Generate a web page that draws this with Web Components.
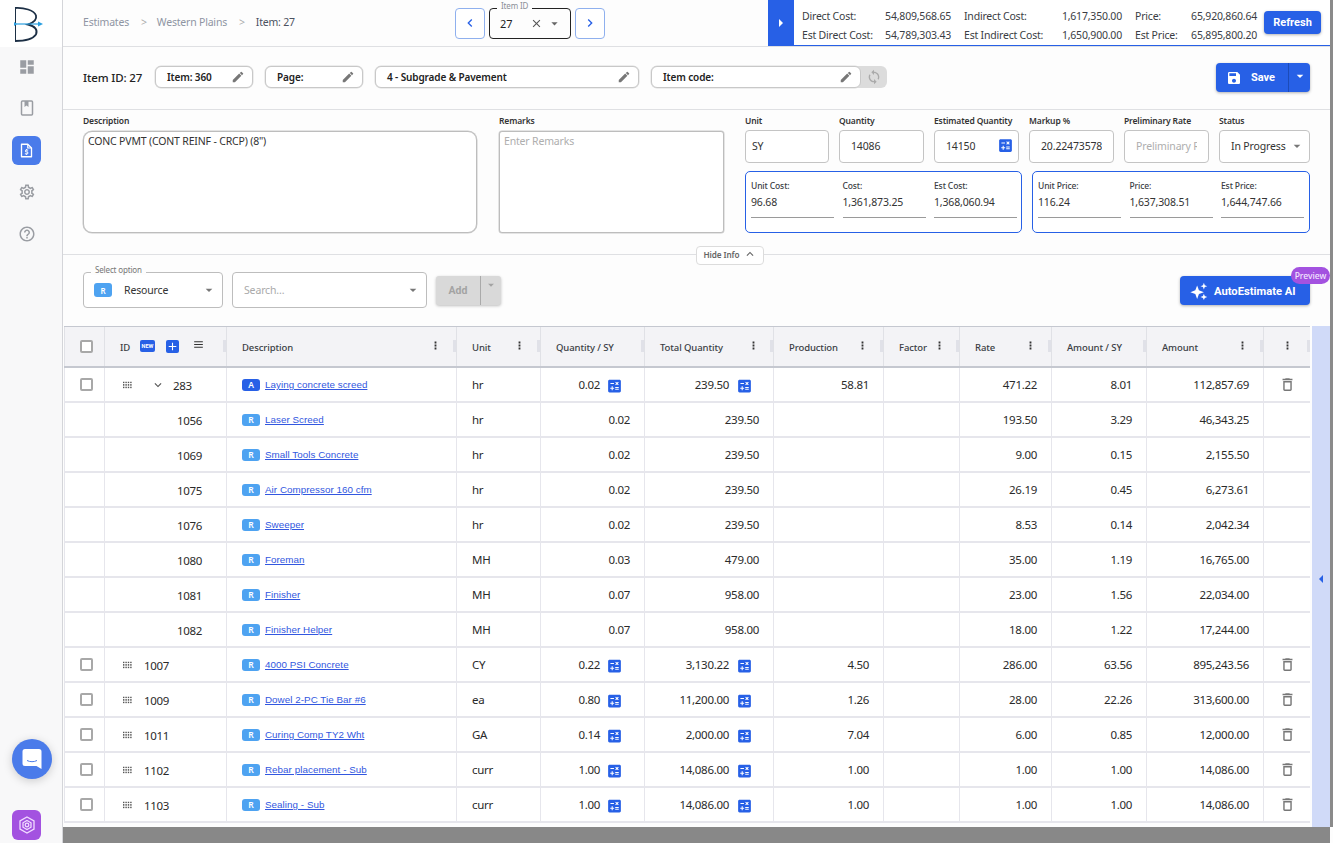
<!DOCTYPE html>
<html>
<head>
<meta charset="utf-8">
<title>Estimate item</title>
<style>
    html, body { margin: 0; height: 100%; overflow: hidden; }
    body { font-family: 'Noto Sans', sans-serif; color: #222; background: #fdfdfd; }
</style>
</head>
<body>
<est-app>
    <side-nav slot="nav"></side-nav>
    <top-bar></top-bar>
    <item-bar></item-bar>
    <info-panel></info-panel>
    <add-bar></add-bar>
    <est-table></est-table>
</est-app>

<script>
const ICONS = {
    dashboard: 'M3 13h8V3H3v10zm0 8h8v-6H3v6zm10 0h8V11h-8v10zm0-18v6h8V3h-8z',
    edit: 'M3 17.25V21h3.75L17.81 9.94l-3.75-3.75L3 17.25zM20.71 7.04c.39-.39.39-1.02 0-1.41l-2.34-2.34a.9959.9959 0 0 0-1.41 0l-1.83 1.83 3.75 3.75 1.83-1.83z',
    save: 'M17 3H5c-1.11 0-2 .9-2 2v14c0 1.1.89 2 2 2h14c1.1 0 2-.9 2-2V7l-4-4zm-5 16c-1.66 0-3-1.34-3-3s1.34-3 3-3 3 1.34 3 3-1.34 3-3 3zm3-10H5V5h10v4z',
    gear: 'M19.43 12.98c.04-.32.07-.64.07-.98 0-.34-.03-.66-.07-.98l2.11-1.65c.19-.15.24-.42.12-.64l-2-3.46c-.09-.16-.26-.25-.44-.25-.06 0-.12.01-.17.03l-2.49 1c-.52-.4-1.08-.73-1.69-.98l-.38-2.65C14.46 2.18 14.25 2 14 2h-4c-.25 0-.46.18-.49.42l-.38 2.65c-.61.25-1.17.59-1.69.98l-2.49-1c-.06-.02-.12-.03-.18-.03-.17 0-.34.09-.43.25l-2 3.46c-.13.22-.07.49.12.64l2.11 1.65c-.04.32-.07.65-.07.98 0 .33.03.66.07.98l-2.11 1.65c-.19.15-.24.42-.12.64l2 3.46c.09.16.26.25.44.25.06 0 .12-.01.17-.03l2.49-1c.52.4 1.08.73 1.69.98l.38 2.65c.03.24.24.42.49.42h4c.25 0 .46-.18.49-.42l.38-2.65c.61-.25 1.17-.59 1.69-.98l2.49 1c.06.02.12.03.18.03.17 0 .34-.09.43-.25l2-3.46c.12-.22.07-.49-.12-.64l-2.11-1.65zm-1.98-1.71c.04.31.05.52.05.73 0 .21-.02.43-.05.73l-.14 1.13.89.7 1.08.84-.7 1.21-1.27-.51-1.04-.42-.9.68c-.43.32-.84.56-1.25.73l-1.06.43-.16 1.13-.2 1.35h-1.4l-.19-1.35-.16-1.13-1.06-.43c-.43-.18-.83-.41-1.23-.71l-.91-.7-1.06.43-1.27.51-.7-1.21 1.08-.84.89-.7-.14-1.13c-.03-.31-.05-.54-.05-.74s.02-.43.05-.73l.14-1.13-.89-.7-1.08-.84.7-1.21 1.27.51 1.04.42.9-.68c.43-.32.84-.56 1.25-.73l1.06-.43.16-1.13.2-1.35h1.39l.19 1.35.16 1.13 1.06.43c.43.18.83.41 1.23.71l.91.7 1.06-.43 1.27-.51.7 1.21-1.07.85-.89.7.14 1.13zM12 8c-2.21 0-4 1.79-4 4s1.79 4 4 4 4-1.79 4-4-1.79-4-4-4zm0 6c-1.1 0-2-.9-2-2s.9-2 2-2 2 .9 2 2-.9 2-2 2z',
    help: 'M11 18h2v-2h-2v2zm1-16C6.48 2 2 6.48 2 12s4.48 10 10 10 10-4.48 10-10S17.52 2 12 2zm0 18c-4.41 0-8-3.59-8-8s3.59-8 8-8 8 3.59 8 8-3.59 8-8 8zm0-14c-2.21 0-4 1.79-4 4h2c0-1.1.9-2 2-2s2 .9 2 2c0 2-3 1.75-3 5h2c0-2.25 3-2.5 3-5 0-2.21-1.79-4-4-4z',
    trash: 'M6 19c0 1.1.9 2 2 2h8c1.1 0 2-.9 2-2V7H6v12zM8 9h8v10H8V9zm7.5-5l-1-1h-5l-1 1H5v2h14V4z',
    sync: 'M12 4V1L8 5l4 4V6c3.31 0 6 2.69 6 6 0 1.01-.25 1.97-.7 2.8l1.46 1.46C19.54 15.03 20 13.57 20 12c0-4.42-3.58-8-8-8zm0 14c-3.31 0-6-2.69-6-6 0-1.01.25-1.97.7-2.8L5.24 7.74C4.46 8.97 4 10.43 4 12c0 4.42 3.58 8 8 8v3l4-4-4-4v3z',
    calc: 'M19 3H5c-1.1 0-2 .9-2 2v14c0 1.1.9 2 2 2h14c1.1 0 2-.9 2-2V5c0-1.1-.9-2-2-2zm-5.97 4.06L14.09 6l1.41 1.41L16.91 6l1.06 1.06-1.41 1.41 1.41 1.41-1.06 1.06-1.41-1.4-1.41 1.41-1.06-1.06 1.41-1.41-1.41-1.42zm-6.78.66h5v1.5h-5v-1.5zM11.5 16h-2v2H8v-2H6v-1.5h2v-2h1.5v2h2V16zm6.5 1.25h-5v-1.5h5v1.5zm0-2.5h-5v-1.5h5v1.5z',
    caret: 'M7 10l5 5 5-5z',
    close: 'M19 6.41L17.59 5 12 10.59 6.41 5 5 6.41 10.59 12 5 17.59 6.41 19 12 13.41 17.59 19 19 17.59 13.41 12z',
    left: 'M15.41 7.41L14 6l-6 6 6 6 1.41-1.41L10.83 12z',
    right: 'M10 6L8.59 7.41 13.17 12l-4.58 4.59L10 18l6-6z',
    up: 'M12 8l-6 6 1.41 1.41L12 10.83l4.59 4.58L18 14z',
    down: 'M16.59 8.59L12 13.17 7.41 8.59 6 10l6 6 6-6z',
    plus: 'M19 13h-6v6h-2v-6H5v-2h6V5h2v6h6v2z',
    menu: 'M4 6h16v2H4zM4 11h16v2H4zM4 16h16v2H4z',
    dots: 'M10 3.5h4v4h-4zM10 10h4v4h-4zM10 16.5h4v4h-4z',
    spark: 'M9.500 4.500l2.400 6.600 6.600 2.400-6.600 2.400L9.500 22.500l-2.400-6.600L.500 13.500l6.600-2.400zM18.500 1l1.200 3.300 3.300 1.200-3.300 1.200-1.200 3.300-1.200-3.300-3.300-1.200 3.300-1.200zM18.500 15.500l1.200 3.300 3.300 1.200-3.300 1.200-1.200 2.800-1.200-2.800-3.300-1.200 3.300-1.200z'
};

const icon = (name, size, color) =>
    `<svg width="${size}" height="${size}" viewBox="0 0 24 24" fill="${color}" style="display:block;flex:none"><path d="${ICONS[name]}"/></svg>`;

// small grid of dots used as the drag handle in the table
const dragHandle = () => {
    let dots = '';
    for (let x = 0; x < 4; x++) {
        for (let y = 0; y < 3; y++) {
            dots += `<rect x="${x * 2.4}" y="${y * 2.6}" width="1.4" height="1.6"/>`;
        }
    }
    return `<svg width="9" height="7" viewBox="0 0 9 7" fill="#555" style="display:block;flex:none">${dots}</svg>`;
};

const UI = `font-family: 'Noto Sans', sans-serif;`;

class EstApp extends HTMLElement {
    constructor() {
        super();
        this.attachShadow({mode: 'open'});
        this.shadowRoot.innerHTML = `
            <style>
                :host { display: grid; grid-template-columns: 63px 1267px 3px; height: 843px; overflow: hidden; }
                main { display: flex; flex-direction: column; min-width: 0; height: 827px; }
                .strip { background: #8a8a8a; height: 827px; }
                .hbar { grid-column: 2 / span 1; background: #888; height: 16px; }
                .side { grid-row: 1 / span 2; }
            </style>
            <div class="side"><slot name="nav"></slot></div>
            <main><slot></slot></main>
            <div class="strip"></div>
            <div class="hbar"></div>
        `;
    }
}

class SideNav extends HTMLElement {
    constructor() {
        super();
        this.attachShadow({mode: 'open'});
        const item = (name, on) => `<div class="nav ${on ? 'on' : ''}">${name}</div>`;
        this.shadowRoot.innerHTML = `
            <style>
                :host { display: flex; flex-direction: column; width: 62px; height: 843px; background: #f8f8f9; border-right: 1px solid #d4d5d9; box-sizing: content-box; }
                .logo { height: 47px; background: #fff; display: flex; align-items: center; padding-left: 14px; }
                .items { display: flex; flex-direction: column; align-items: flex-start; gap: 12.750px; padding: 5px 0 0 12px; }
                .nav { width: 29px; height: 29px; border-radius: 6px; display: flex; align-items: center; justify-content: center; }
                .nav.on { background: #4a7bea; }
                .grow { flex: 1; }
                .chat { width: 40px; height: 40px; margin: 0 0 31px 12px; border-radius: 50%; background: #4a7bea; display: flex; align-items: center; justify-content: center; box-shadow: 0 2px 10px rgba(0,0,0,.18); }
                .ai { width: 29px; height: 30px; margin: 0 0 3px 12px; border-radius: 6px; background: #a352e0; display: flex; align-items: center; justify-content: center; }
            </style>
            <div class="logo">
                <svg width="32" height="36" viewBox="0 0 32 36" fill="none">
                    <path d="M1.500 2.500V35" stroke="#1c2f45" stroke-width="1"/>
                    <path d="M1 2C10 1.500 20 4 22 9.500C23 13.500 20 16.500 14 18.500C21 20 24 24 22 28.500C19 33 10 35 1 35" stroke="#1c2f45" stroke-width="1.800"/>
                    <path d="M1 18H27" stroke="#2b9fe0" stroke-width="1.200"/>
                    <path d="M24 15.500L29 18L24 20.500z" fill="#2b9fe0"/>
                    <path d="M0 16L3 18L0 20z" fill="#2b9fe0"/>
                </svg>
            </div>
            <div class="items">
                ${item(icon('dashboard', 18, '#9a9da3'))}
                ${item(`<svg width="18" height="18" viewBox="0 0 18 18" fill="none" stroke="#9a9da3" stroke-width="1.500"><rect x="3.500" y="2" width="11" height="14" rx="1"/><path d="M6.500 2v6l2-1.500 2 1.500V2" fill="#9a9da3" stroke="none"/></svg>`)}
                ${item(`<svg width="15" height="17" viewBox="0 0 18 20" fill="none"><path d="M3 2.500h7.500L15 7v10.500H3z" stroke="#fff" stroke-width="1.600" stroke-linejoin="round"/><path d="M10.500 2.500V7H15" stroke="#fff" stroke-width="1.400"/><path d="M11 9.500H8v2.200h2.500v2.300H7M9 8.300v1.200M9 14v1.200" stroke="#fff" stroke-width="1.200"/></svg>`, true)}
                ${item(icon('gear', 18, '#9a9da3'))}
                ${item(icon('help', 18, '#9a9da3'))}
            </div>
            <div class="grow"></div>
            <div class="chat">
                <svg width="22" height="24" viewBox="0 0 22 24"><path d="M4 2h14a2.500 2.500 0 0 1 2.500 2.500V22l-5-3H4a2.500 2.500 0 0 1-2.500-2.500v-12A2.500 2.500 0 0 1 4 2z" fill="#fff"/><path d="M6 13.500c3 1.600 7 1.600 10 0" stroke="#4a7bea" stroke-width="1" fill="none"/></svg>
            </div>
            <div class="ai">
                <svg width="20" height="20" viewBox="0 0 20 20" fill="none" stroke="#f1dcff" stroke-width="1.300"><path d="M10 2l7 4v8l-7 4-7-4V6z"/><path d="M10 5.500l4 2.300v4.400l-4 2.300-4-2.300V7.800z"/><circle cx="10" cy="10" r="1.800"/></svg>
            </div>
        `;
    }
}

class SumCell extends HTMLElement {
    constructor() {
        super();
        this.attachShadow({mode: 'open'});
        this.shadowRoot.innerHTML = `
            <style>
                :host { display: flex; justify-content: space-between; ${UI} font-size: 10.5px; letter-spacing: -.2px; color: #3a3d44; white-space: nowrap; line-height: 17px; }
            </style>
            <span>${this.getAttribute('label')}</span><span>${this.getAttribute('value')}</span>
        `;
    }
}

class TopBar extends HTMLElement {
    constructor() {
        super();
        this.attachShadow({mode: 'open'});
        this.shadowRoot.innerHTML = `
            <style>
                :host { display: flex; align-items: stretch; height: 46px; border-bottom: 1px solid #dfe0e3; ${UI} flex: none; background: #fdfdfd; }
                .crumbs { padding: 0 0 2px 20px; box-sizing: content-box; width: 372px; display: flex; align-items: center; font-size: 10.5px; letter-spacing: -.2px; color: #8f95a3; }
                .crumbs i { font-style: normal; margin: 0 10px 0 12px; color: #aaa; }
                .crumbs b { font-weight: 400; color: #4c5260; margin-left: 1px; }
                .pager { display: flex; align-items: center; gap: 4px; width: 313px; }
                .pg { width: 28px; height: 29px; border: 1px solid #8fb0ee; border-radius: 4px; display: flex; align-items: center; justify-content: center; background: #fff; }
                .sel { position: relative; height: 29px; border: 1px solid #222; border-radius: 4px; display: flex; align-items: center; font-size: 11px; padding-left: 10px; box-sizing: content-box; width: 70px; }
                .sel span { flex: 1; }
                .sel em { position: absolute; left: 7px; top: -8px; background: #fdfdfd; padding: 0 4px; font-style: normal; font-size: 8px; color: #8b8f97; letter-spacing: -.15px; line-height: 10px; }
                .sum { flex: 1; display: flex; border-bottom: 1px solid #2760e6; height: 45px; background: #fff; }
                .tog { width: 26px; background: #2760e6; display: flex; align-items: center; justify-content: center; flex: none; }
                .tog div { width: 0; height: 0; border-left: 4px solid #fff; border-top: 4px solid transparent; border-bottom: 4px solid transparent; }
                .g { display: grid; grid-template-columns: 149px 158px 122px; column-gap: 13px; padding: 8px 0 0 8px; }
                button { margin: 11px 0 0 7px; width: 57px; height: 23px; border: 0; border-radius: 4px; background: #2760e6; color: #fff; font: 700 11px Roboto, sans-serif; box-shadow: 0 1px 3px rgba(0,0,0,.3); padding: 0; }
            </style>
            <div class="crumbs">Estimates<i>&gt;</i>Western Plains<i>&gt;</i><b>Item: 27</b></div>
            <div class="pager">
                <div class="pg">${icon('left', 16, '#2760e6')}</div>
                <div class="sel"><em>Item ID</em><span>27</span>${icon('close', 13, '#555')}<span style="flex:none;width:4px"></span>${icon('caret', 15, '#666')}<span style="flex:none;width:8px"></span></div>
                <div class="pg">${icon('right', 16, '#2760e6')}</div>
            </div>
            <div class="sum">
                <div class="tog"><div></div></div>
                <div class="g">
                    <sum-cell label="Direct Cost:" value="54,809,568.65"></sum-cell>
                    <sum-cell label="Indirect Cost:" value="1,617,350.00"></sum-cell>
                    <sum-cell label="Price:" value="65,920,860.64"></sum-cell>
                    <sum-cell label="Est Direct Cost:" value="54,789,303.43"></sum-cell>
                    <sum-cell label="Est Indirect Cost:" value="1,650,900.00"></sum-cell>
                    <sum-cell label="Est Price:" value="65,895,800.20"></sum-cell>
                </div>
                <button>Refresh</button>
            </div>
        `;
    }
}

class EditChip extends HTMLElement {
    constructor() {
        super();
        this.attachShadow({mode: 'open'});
        this.shadowRoot.innerHTML = `
            <style>
                :host { display: flex; align-items: center; justify-content: space-between; height: 20px; box-sizing: content-box; border: 1px solid #c8c8c8; border-radius: 6px; box-shadow: 0 0 0 .5px #ddd; padding: 0 7px 0 11px; background: #fff; ${UI} font-size: 10px; font-weight: 600; letter-spacing: -.12px; color: #222; white-space: nowrap; }
            </style>
            <span><slot></slot></span>${icon('edit', 14, '#777')}
        `;
    }
}

class ItemBar extends HTMLElement {
    constructor() {
        super();
        this.attachShadow({mode: 'open'});
        this.shadowRoot.innerHTML = `
            <style>
                :host { display: flex; align-items: center; padding: 0 0 2px 20px; box-sizing: border-box; height: 63px; border-bottom: 1px solid #dfe0e3; ${UI} flex: none; }
                h1 { margin: 0 11px 0 0; font-size: 11.5px; font-weight: 500; letter-spacing: -.15px; width: 61px; white-space: nowrap; }
                edit-chip { margin-right: 12px; }
                .code { display: flex; align-items: stretch; width: 236px; height: 22px; background: #dcdcdc; border-radius: 6px; }
                .code edit-chip { flex: 1; margin: 0; }
                .code div { width: 26px; display: flex; align-items: center; justify-content: center; }
                .save { margin: 1px 20px 0 auto; display: flex; width: 94px; height: 29px; border-radius: 4px; background: #2760e6; box-shadow: 0 1px 3px rgba(0,0,0,.3); color: #fff; font: 700 11px Roboto, sans-serif; }
                .save span { flex: 1; display: flex; align-items: center; gap: 9px; padding-left: 10px; }
                .save i { width: 21px; border-left: 1px solid #1c4bb8; display: flex; justify-content: center; align-items: flex-start; padding-top: 5px; }
            </style>
            <h1>Item ID: 27</h1>
            <edit-chip style="width:78px">Item: 360</edit-chip>
            <edit-chip style="width:78px">Page:</edit-chip>
            <edit-chip style="width:244px">4 - Subgrade &amp; Pavement</edit-chip>
            <div class="code"><edit-chip>Item code:</edit-chip><div>${icon('sync', 16, '#aaa')}</div></div>
            <div class="save"><span>${icon('save', 16, '#fff')}Save</span><i>${icon('caret', 16, '#fff')}</i></div>
        `;
    }
}

class FormField extends HTMLElement {
    constructor() {
        super();
        this.attachShadow({mode: 'open'});
        const ph = this.hasAttribute('placeholder');
        const text = this.getAttribute('placeholder') || this.getAttribute('value');
        this.shadowRoot.innerHTML = `
            <style>
                :host { display: block; ${UI} min-width: 0; }
                label { display: block; font-size: 8.500px; font-weight: 600; letter-spacing: -.12px; color: #333; line-height: 12px; margin-bottom: 3px; white-space: nowrap; }
                .box { height: 33px; box-sizing: border-box; border: 1px solid #c4c4c4; border-radius: 4px; background: #fff; display: flex; align-items: center; padding: 0 ${this.getAttribute('end') || 4}px 2px ${this.getAttribute('pad') || 11}px; font-size: 10.500px; letter-spacing: -.15px; color: ${ph ? '#aeaeae' : '#333'}; overflow: hidden; white-space: nowrap; }
                .t { flex: 1; overflow: hidden; min-width: 0; }
            </style>
            <label>${this.getAttribute('label')}</label>
            <div class="box"><div class="t">${text}</div><slot></slot></div>
        `;
    }
}

class AreaField extends HTMLElement {
    constructor() {
        super();
        this.attachShadow({mode: 'open'});
        const ph = this.hasAttribute('placeholder');
        this.shadowRoot.innerHTML = `
            <style>
                :host { display: block; ${UI} }
                label { display: block; font-size: 8.500px; font-weight: 600; letter-spacing: -.12px; color: #333; line-height: 12px; margin-bottom: 4px; }
                .box { border: 1px solid #bdbdbd; box-shadow: 0 0 0 .5px #ccc; border-radius: ${this.getAttribute('radius')}px; background: #fff; padding: 2px 4px; font-size: 10.500px; letter-spacing: -.17px; color: ${ph ? '#aeaeae' : '#333'}; box-sizing: border-box; height: 102px; }
            </style>
            <label>${this.getAttribute('label')}</label>
            <div class="box">${this.getAttribute('placeholder') || this.getAttribute('value')}</div>
        `;
    }
}

class MoneyBox extends HTMLElement {
    constructor() {
        super();
        this.attachShadow({mode: 'open'});
        const items = JSON.parse(this.getAttribute('items'));
        this.shadowRoot.innerHTML = `
            <style>
                :host { display: grid; grid-template-columns: repeat(3, 83px); column-gap: 8.500px; height: 62px; box-sizing: border-box; border: 1px solid #2760e6; border-radius: 5px; padding: 8px 5px 0; ${UI} background: #fff; }
                small { display: block; font-size: 8.500px; font-weight: 500; letter-spacing: -.12px; color: #3a3d44; line-height: 12px; }
                div.v { font-size: 10.500px; letter-spacing: -.16px; color: #333; line-height: 15px; margin-top: 3px; padding-bottom: 7px; border-bottom: 1px solid #9a9a9a; white-space: nowrap; }
            </style>
            ${items.map(i => `<div><small>${i[0]}</small><div class="v">${i[1]}</div></div>`).join('')}
        `;
    }
}

class InfoPanel extends HTMLElement {
    constructor() {
        super();
        this.attachShadow({mode: 'open'});
        this.shadowRoot.innerHTML = `
            <style>
                :host { display: block; flex: none; ${UI} }
                .grid { display: grid; grid-template-columns: 394px 224px 565px; column-gap: 22px; padding: 5px 20px 0; height: 144px; box-sizing: border-box; }
                .remarks { margin-right: -1px; }
                .right { display: flex; flex-direction: column; gap: 8px; }
                .fields { display: grid; grid-template-columns: 84px 85px 85px 85px 85px 91px; column-gap: 10px; }
                .boxes { display: grid; grid-template-columns: 277px 278px; column-gap: 10px; }
                .hide { border-top: 1px solid #dfe0e3; height: 0; display: flex; justify-content: center; padding-left: 67px; position: relative; z-index: 1; }
                .hide div { margin-top: -9px; height: 17px; width: 66px; padding-bottom: 3px; box-sizing: content-box; height: 14px; border: 1px solid #dcdcdc; border-radius: 4px; background: #fff; display: flex; align-items: center; justify-content: center; gap: 3px; font-size: 8.200px; font-weight: 600; letter-spacing: -.1px; color: #666; }
            </style>
            <div class="grid">
                <area-field label="Description" radius="9" value='CONC PVMT (CONT REINF - CRCP) (8")'></area-field>
                <area-field class="remarks" label="Remarks" radius="3" placeholder="Enter Remarks"></area-field>
                <div class="right">
                    <div class="fields">
                        <form-field label="Unit" value="SY" pad="6"></form-field>
                        <form-field label="Quantity" value="14086"></form-field>
                        <form-field label="Estimated Quantity" value="14150">${icon('calc', 17, '#2760e6')}</form-field>
                        <form-field label="Markup %" value="20.224735783" end="11"></form-field>
                        <form-field label="Preliminary Rate" placeholder="Preliminary Rate" end="11"></form-field>
                        <form-field label="Status" value="In Progress">${icon('caret', 16, '#777')}</form-field>
                    </div>
                    <div class="boxes">
                        <money-box items='[["Unit Cost:","96.68"],["Cost:","1,361,873.25"],["Est Cost:","1,368,060.94"]]'></money-box>
                        <money-box items='[["Unit Price:","116.24"],["Price:","1,637,308.51"],["Est Price:","1,644,747.66"]]'></money-box>
                    </div>
                </div>
            </div>
            <div class="hide"><div>Hide Info ${icon('up', 14, '#666')}</div></div>
        `;
    }
}

class AddBar extends HTMLElement {
    constructor() {
        super();
        this.attachShadow({mode: 'open'});
        this.shadowRoot.innerHTML = `
            <style>
                :host { display: flex; align-items: center; height: 71px; padding: 0 20px; flex: none; ${UI} box-sizing: border-box; }
                .s { position: relative; height: 34px; margin-top: -1px; border: 1px solid #bdbdbd; border-radius: 4px; background: #fff; display: flex; align-items: center; font-size: 10.500px; letter-spacing: -.15px; color: #333; }
                .s em { position: absolute; left: 7px; top: -8px; background: #fdfdfd; padding: 0 4px; font-style: normal; font-size: 8px; line-height: 10px; color: #777; }
                .tag { width: 18px; height: 14px; border-radius: 3px; background: #4ea3f1; color: #fff; font-size: 8px; font-weight: 600; display: flex; align-items: center; justify-content: center; margin: 0 12px 0 10px; letter-spacing: 0; }
                .grow { flex: 1; }
                .add { display: flex; width: 65px; height: 29px; margin-left: 9px; background: #d9d9d9; border-radius: 3px; box-shadow: 0 1px 3px rgba(0,0,0,.25); color: #a3a3a3; font: 700 10.500px Roboto, sans-serif; }
                .add span { flex: 1; display: flex; align-items: center; justify-content: center; }
                .add i { width: 21px; border-left: 1px solid #aaa; display: flex; justify-content: center; padding-top: 2px; box-sizing: border-box; }
                .auto { position: relative; width: 130px; height: 29px; padding-top: 1px; background: #2760e6; border-radius: 4px; box-shadow: 0 1px 3px rgba(0,0,0,.3); color: #fff; font: 700 11.200px Roboto, sans-serif; display: flex; align-items: center; gap: 6px; padding-left: 10px; box-sizing: border-box; white-space: nowrap; }
                .auto em { position: absolute; right: -20px; top: -9px; width: 39px; height: 17px; border-radius: 9px; background: #a352e0; font: 500 8.500px 'Noto Sans', sans-serif; display: flex; align-items: center; justify-content: center; color: #f3e6ff; }
            </style>
            <div class="s" style="width:138px"><em>Select option</em><div class="tag">R</div><span style="flex:1">Resource</span>${icon('caret', 16, '#777')}<span style="width:5px"></span></div>
            <div class="s" style="width:193px;margin-left:9px;color:#aaa"><span style="flex:1;padding-left:11px">Search...</span>${icon('caret', 16, '#777')}<span style="width:5px"></span></div>
            <div class="add"><span>Add</span><i>${icon('caret', 14, '#a3a3a3')}</i></div>
            <div class="grow"></div>
            <div class="auto">${icon('spark', 18, '#fff')}AutoEstimate AI<em>Preview</em></div>
        `;
    }
}

const GRID = '40px 122px 230px 84px 104px 129px 110px 76px 92px 95px 117px 47px';

class EstHead extends HTMLElement {
    constructor() {
        super();
        this.attachShadow({mode: 'open'});
        const th = (label, dotsAt) => `
            <div class="th">${label ? `<span class="l">${label}</span>` : ''}${dotsAt ? `<span class="d" style="left:${dotsAt}px">${icon('dots', 11, '#333')}</span>` : ''}<u></u></div>`;
        this.shadowRoot.innerHTML = `
            <style>
                :host { display: grid; grid-template-columns: ${GRID}; height: 39px; background: #f3f3f6; border-top: 1px solid #c5c8d0; border-bottom: 2px solid #c5c8d0; ${UI} font-size: 9.500px; letter-spacing: -.1px; font-weight: 500; color: #3a3d44; box-sizing: content-box; }
                .th { position: relative; display: flex; align-items: center; padding-left: 15px; border-left: 1px solid #e0e1e6; box-sizing: border-box; white-space: nowrap; }
                .th:first-child { border-left: 0; }
                .l { padding-top: 2px; }
                .d { position: absolute; top: 13px; }
                u { position: absolute; right: 0; top: 13px; width: 3px; height: 12px; background: #e0e1e8; }
                .cb { width: 13px; height: 13px; border: 2px solid #a8a8a8; border-radius: 2px; background: #fff; box-sizing: border-box; }
                .nw { position: absolute; left: 35px; top: 13px; width: 15px; height: 12px; background: #2760e6; color: #fff; font: 700 5.500px Roboto, sans-serif; border-radius: 2px; display: flex; align-items: center; justify-content: center; letter-spacing: 0; }
                .pl { position: absolute; left: 61px; top: 13px; width: 13px; height: 13px; background: #2760e6; border-radius: 2px; display: flex; align-items: center; justify-content: center; }
                .mn { position: absolute; left: 87px; top: 11px; }
            </style>
            <div class="th"><div class="cb"></div></div>
            <div class="th"><span class="l">ID</span><span class="nw">NEW</span><span class="pl">${icon('plus', 13, '#fff')}</span><span class="mn">${icon('menu', 13, '#333')}</span><u></u></div>
            ${th('Description', 203)}
            ${th('Unit', 57)}
            ${th('Quantity / SY', 0)}
            ${th('Total Quantity', 103)}
            ${th('Production', 83)}
            ${th('Factor', 50)}
            ${th('Rate', 65)}
            ${th('Amount / SY', 0)}
            ${th('Amount', 90)}
            ${th('', 18)}
        `;
    }
}

class EstRow extends HTMLElement {
    constructor() {
        super();
        this.attachShadow({mode: 'open'});
    }
    set data(d) {
        const calc = (cls) => d.top ? `<span class="c ${cls}">${icon('calc', 17, '#2760e6')}</span>` : '';
        let id;
        if (d.kind === 'A') {
            id = `<span class="h" style="left:18px">${dragHandle()}</span><span class="h" style="left:46px">${icon('down', 14, '#555')}</span><span class="n" style="left:68px">${d.id}</span>`;
        } else if (d.top) {
            id = `<span class="h" style="left:18px">${dragHandle()}</span><span class="n" style="left:39px">${d.id}</span>`;
        } else {
            id = `<span class="n" style="left:72px">${d.id}</span>`;
        }
        this.shadowRoot.innerHTML = `
            <style>
                :host { display: grid; grid-template-columns: ${GRID}; height: 35px; box-sizing: border-box; border-bottom: 2px solid #e6e6ec; background: #fff; ${UI} font-size: 11.500px; letter-spacing: -.3px; color: #2a2a2a; }
                .td { display: flex; align-items: center; border-left: 1px solid #e6e6ec; box-sizing: border-box; position: relative; white-space: nowrap; }
                .td:first-child { border-left: 0; }
                .td:last-child { justify-content: center; }
                .r { justify-content: flex-end; padding-right: 14px; }
                .p { padding-left: 15px; }
                .cb { width: 13px; height: 13px; border: 2px solid #a8a8a8; border-radius: 2px; background: #fff; box-sizing: border-box; margin-left: 15px; }
                .h { position: absolute; top: 50%; transform: translateY(-50%); }
                .n { position: absolute; top: 50%; transform: translateY(-50%); }
                .tag { width: 18px; height: 12px; border-radius: 3px; color: #fff; font: 600 8.500px 'Noto Sans', sans-serif; letter-spacing: 0; display: flex; align-items: center; justify-content: center; margin-right: 5px; flex: none; }
                a { font: 9.800px 'Liberation Sans', sans-serif; letter-spacing: .05px; color: #3257e0; text-decoration: underline; text-underline-offset: 1px; }
                .c { margin: 0 7px 0 6px; transform: translateY(1.5px); }
                .c.tq { margin: 0 6px 0 7px; }
            </style>
            <div class="td">${d.top ? '<div class="cb"></div>' : ''}</div>
            <div class="td">${id}</div>
            <div class="td p"><span class="tag" style="background:${d.kind === 'A' ? '#2760e6' : '#4ea3f1'}">${d.kind}</span><a>${d.name}</a></div>
            <div class="td p">${d.unit}</div>
            <div class="td r">${d.qty}${calc('')}</div>
            <div class="td r">${d.total}${calc('tq')}</div>
            <div class="td r">${d.prod || ''}</div>
            <div class="td"></div>
            <div class="td r">${d.rate}</div>
            <div class="td r">${d.per}</div>
            <div class="td r">${d.amount}</div>
            <div class="td">${d.top ? icon('trash', 17, '#777') : ''}</div>
        `;
    }
}

const ROWS = [
    {id: '283', kind: 'A', top: true, name: 'Laying concrete screed', unit: 'hr', qty: '0.02', total: '239.50', prod: '58.81', rate: '471.22', per: '8.01', amount: '112,857.69'},
    {id: '1056', kind: 'R', name: 'Laser Screed', unit: 'hr', qty: '0.02', total: '239.50', rate: '193.50', per: '3.29', amount: '46,343.25'},
    {id: '1069', kind: 'R', name: 'Small Tools Concrete', unit: 'hr', qty: '0.02', total: '239.50', rate: '9.00', per: '0.15', amount: '2,155.50'},
    {id: '1075', kind: 'R', name: 'Air Compressor 160 cfm', unit: 'hr', qty: '0.02', total: '239.50', rate: '26.19', per: '0.45', amount: '6,273.61'},
    {id: '1076', kind: 'R', name: 'Sweeper', unit: 'hr', qty: '0.02', total: '239.50', rate: '8.53', per: '0.14', amount: '2,042.34'},
    {id: '1080', kind: 'R', name: 'Foreman', unit: 'MH', qty: '0.03', total: '479.00', rate: '35.00', per: '1.19', amount: '16,765.00'},
    {id: '1081', kind: 'R', name: 'Finisher', unit: 'MH', qty: '0.07', total: '958.00', rate: '23.00', per: '1.56', amount: '22,034.00'},
    {id: '1082', kind: 'R', name: 'Finisher Helper', unit: 'MH', qty: '0.07', total: '958.00', rate: '18.00', per: '1.22', amount: '17,244.00'},
    {id: '1007', kind: 'R', top: true, name: '4000 PSI Concrete', unit: 'CY', qty: '0.22', total: '3,130.22', prod: '4.50', rate: '286.00', per: '63.56', amount: '895,243.56'},
    {id: '1009', kind: 'R', top: true, name: 'Dowel 2-PC Tie Bar #6', unit: 'ea', qty: '0.80', total: '11,200.00', prod: '1.26', rate: '28.00', per: '22.26', amount: '313,600.00'},
    {id: '1011', kind: 'R', top: true, name: 'Curing Comp TY2 Wht', unit: 'GA', qty: '0.14', total: '2,000.00', prod: '7.04', rate: '6.00', per: '0.85', amount: '12,000.00'},
    {id: '1102', kind: 'R', top: true, name: 'Rebar placement - Sub', unit: 'curr', qty: '1.00', total: '14,086.00', prod: '1.00', rate: '1.00', per: '1.00', amount: '14,086.00'},
    {id: '1103', kind: 'R', top: true, name: 'Sealing - Sub', unit: 'curr', qty: '1.00', total: '14,086.00', prod: '1.00', rate: '1.00', per: '1.00', amount: '14,086.00'}
];

class EstTable extends HTMLElement {
    constructor() {
        super();
        this.attachShadow({mode: 'open'});
        this.shadowRoot.innerHTML = `
            <style>
                :host { display: flex; flex: 1; min-height: 0; gap: 2px; padding-left: 1px; }
                .t { width: 1246px; flex: none; }
                .panel { width: 18px; background: #d0daf8; display: flex; align-items: center; justify-content: center; padding-top: 4px; box-sizing: border-box; }
                .panel div { width: 0; height: 0; border-right: 4px solid #2760e6; border-top: 4px solid transparent; border-bottom: 4px solid transparent; }
            </style>
            <div class="t"><est-head></est-head></div>
            <div class="panel"><div></div></div>
        `;
        const t = this.shadowRoot.querySelector('.t');
        ROWS.forEach(r => {
            const row = document.createElement('est-row');
            row.data = r;
            t.appendChild(row);
        });
    }
}

customElements.define('sum-cell', SumCell);
customElements.define('edit-chip', EditChip);
customElements.define('form-field', FormField);
customElements.define('area-field', AreaField);
customElements.define('money-box', MoneyBox);
customElements.define('est-head', EstHead);
customElements.define('est-row', EstRow);
customElements.define('est-app', EstApp);
customElements.define('side-nav', SideNav);
customElements.define('top-bar', TopBar);
customElements.define('item-bar', ItemBar);
customElements.define('info-panel', InfoPanel);
customElements.define('add-bar', AddBar);
customElements.define('est-table', EstTable);
</script>
</body>
</html>
